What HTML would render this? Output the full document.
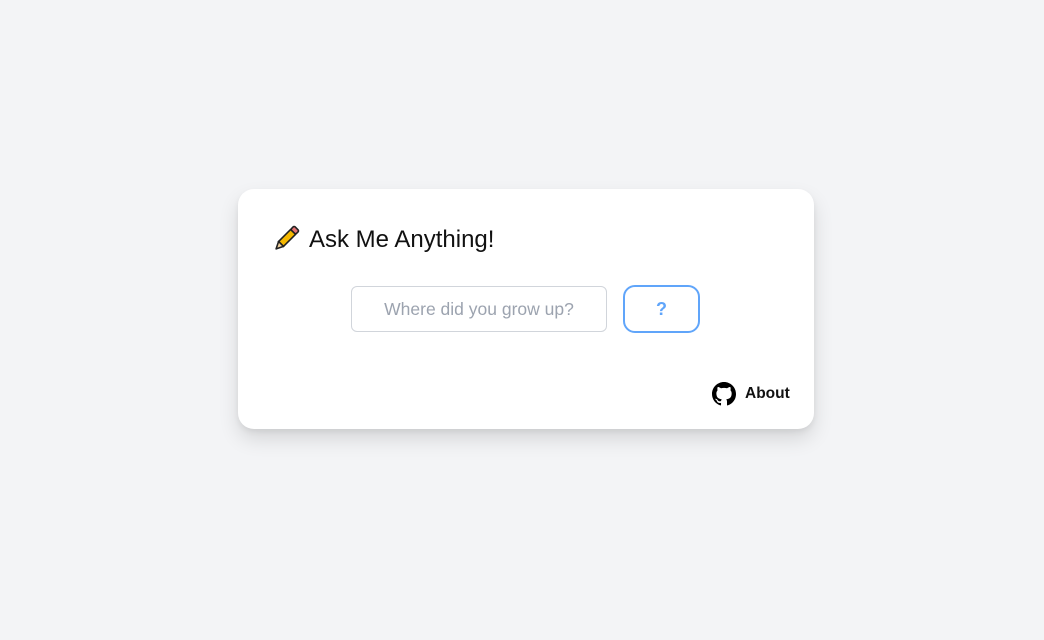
<!DOCTYPE html>
<html><head><style>
body{margin:0;width:1044px;height:640px;background:#f3f4f6;font-family:"Liberation Sans",sans-serif;position:relative;overflow:hidden}
.card{position:absolute;left:238px;top:189px;width:576px;height:240px;background:#fff;border-radius:16px;box-shadow:0 10px 20px rgba(0,0,0,.12),0 3px 6px rgba(0,0,0,.06)}
.title{position:absolute;left:71px;top:37px;font-size:24px;color:#111}
.input{position:absolute;left:113px;top:97px;width:254px;height:44px;border:1px solid #d1d5db;border-radius:6px;font-size:17.5px;color:#9ca3af;text-align:center;line-height:44px}
.btn{position:absolute;left:385px;top:96px;width:73px;height:44px;border:2px solid #60a5fa;border-radius:12px;color:#60a5fa;font-weight:bold;font-size:18px;text-align:center;line-height:44px}
.about{position:absolute;left:474px;top:193px;font-size:15.5px;font-weight:bold;color:#111;display:flex;align-items:center;gap:9px}
</style></head><body>
<div class="card">
<svg style="position:absolute;left:32px;top:34px" width="32" height="32" viewBox="0 0 32 32"><g transform="rotate(45 16 16)"><rect x="12.5" y="1" width="7" height="5" rx="1.5" fill="#e57373" stroke="#222" stroke-width="1.6"/><rect x="12.5" y="6" width="7" height="17" fill="#f5b800" stroke="#222" stroke-width="1.6"/><path d="M12.5 23 L16 30 L19.5 23Z" fill="#f2d3a0" stroke="#222" stroke-width="1.6" stroke-linejoin="round"/></g></svg>
<div class="title">Ask Me Anything!</div>
<div class="input">Where did you grow up?</div>
<div class="btn">?</div>
<div class="about"><svg width="24" height="24" viewBox="0 0 16 16"><path fill="#000" d="M8 0C3.58 0 0 3.58 0 8c0 3.54 2.29 6.53 5.47 7.590.4.07.55-.17.55-.38v-1.33c-2.23.48-2.7-1.07-2.7-1.07-.36-.92-.89-1.170-.89-1.17-.73-.5.05-.49.05-.49.8.06 1.23.82 1.23.82.71 1.22 1.87.87 2.33.66.07-.52.28-.87.51-1.07-1.78-.2-3.64-.89-3.64-3.95 0-.87.31-1.590.82-2.15-.08-.2-.36-1.02.08-2.12 0 0 .67-.21 2.2.82.64-.18 1.32-.27 2-.27.68 0 1.36.09 2 .27 1.53-1.04 2.2-.82 2.2-.82.44 1.1.16 1.92.08 2.12.51.56.82 1.27.82 2.15 0 3.07-1.87 3.75-3.65 3.95.29.25.54.73.54 1.48v2.2c0 .21.15.46.55.38A8.013 8.013 0 0016 8c0-4.42-3.58-8-8-8z"/></svg>About</div>
</div>
</body></html>
